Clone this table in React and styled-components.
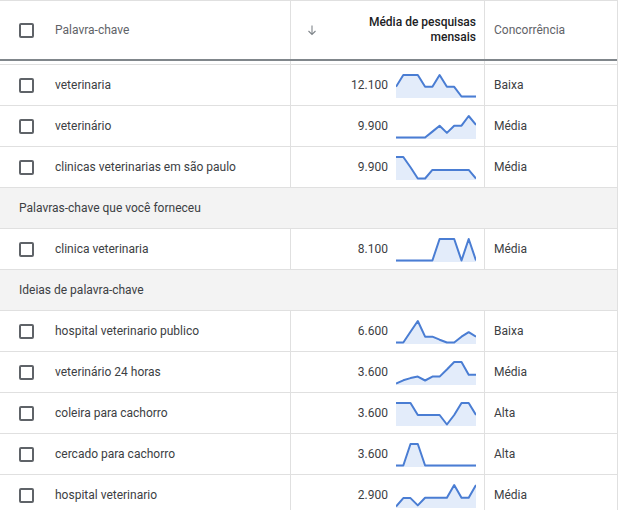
import React from 'react';
import styled, { createGlobalStyle } from 'styled-components';

const GlobalStyle = createGlobalStyle`
    body {
        margin: 0;
        background: #fff;
        font-family: Roboto, 'Liberation Sans', Arial, sans-serif;
    }
`;

const Table = styled.div`
    width: 618px;
    box-sizing: border-box;
    border-top: 1px solid #e0e0e0;
    border-right: 1px solid #e0e0e0;
    font-size: 12px;
    color: #3c4043;
`;

const Grid = styled.div`
    display: grid;
    grid-template-columns: 291px 194px 1fr;
    height: ${(p) => p.$height}px;
    border-bottom: ${(p) => p.$border || '1px solid #e0e0e0'};
`;

const Cell = styled.div`
    display: flex;
    align-items: center;
    box-sizing: border-box;
    min-width: 0;
    border-right: ${(p) => (p.$last ? 'none' : '1px solid #e0e0e0')};
`;

const KeywordCell = styled(Cell)`
    padding-left: 19px;
    gap: 21px;
    color: ${(p) => (p.$head ? '#5f6368' : '#3c4043')};
`;

const VolumeCell = styled(Cell)`
    justify-content: flex-end;
    gap: 8px;
    padding-right: 8px;
`;

const HeadVolumeCell = styled(Cell)`
    justify-content: space-between;
    padding: 0 8px 0 15px;
`;

const HeadTitle = styled.div`
    text-align: right;
    font-weight: 500;
    color: #202124;
    line-height: 15px;
`;

const CompCell = styled(Cell)`
    padding-left: 9px;
    color: ${(p) => (p.$head ? '#5f6368' : '#3c4043')};
`;

const Checkbox = styled.span`
    display: inline-block;
    flex: none;
    width: 15px;
    height: 15px;
    box-sizing: border-box;
    border: 2px solid #5f6368;
    border-radius: 2px;
`;

const Section = styled.div`
    height: 40px;
    display: flex;
    align-items: center;
    padding-left: 19px;
    background: #f3f3f3;
    border-bottom: 1px solid #e0e0e0;
    color: #3c4043;
`;

const Spark = styled.svg`
    display: block;
    flex: none;
`;

const rows = [
    { kw: 'veterinaria', vol: '12.100', comp: 'Baixa', d: [0.45, 1, 1, 1, 0.45, 0.45, 1, 0.45, 0.45, 0, 0, 0] },
    { kw: 'veterinário', vol: '9.900', comp: 'Média', d: [0, 0, 0, 0, 0, 0.275, 0.55, 0.215, 0.55, 0.55, 1, 0.585] },
    { kw: 'clinicas veterinarias em são paulo', vol: '9.900', comp: 'Média', d: [1, 1, 0.52, 0, 0, 0.4, 0.4, 0.4, 0.4, 0.4, 0.4, 0] },
    { section: 'Palavras-chave que você forneceu' },
    { kw: 'clinica veterinaria', vol: '8.100', comp: 'Média', d: [0, 0, 0, 0, 0, 0, 1, 1, 1, 0, 1, 0] },
    { section: 'Ideias de palavra-chave' },
    { kw: 'hospital veterinario publico', vol: '6.600', comp: 'Baixa', d: [0, 0, 0.5, 1, 0.27, 0.27, 0.13, 0, 0, 0.27, 0.48, 0.27] },
    { kw: 'veterinário 24 horas', vol: '3.600', comp: 'Média', d: [0, 0.15, 0.25, 0.32, 0.14, 0.32, 0.32, 0.65, 1, 1, 0.41, 0.41] },
    { kw: 'coleira para cachorro', vol: '3.600', comp: 'Alta', d: [1, 1, 1, 0.44, 0.44, 0.44, 0.44, 0, 0.44, 1, 1, 0.44] },
    { kw: 'cercado para cachorro', vol: '3.600', comp: 'Alta', d: [0, 0, 1, 1, 0, 0, 0, 0, 0, 0, 0, 0] },
    { kw: 'hospital veterinario', vol: '2.900', comp: 'Média', d: [0, 0.39, 0.39, 0.05, 0.41, 0.41, 0.41, 0.41, 1, 0.41, 0.41, 1] },
];

function Sparkline({ data }) {
    const w = 80;
    const h = 26;
    const pts = data.map((v, i) => [(i * w) / (data.length - 1), 3 + (1 - v) * 21.5]);
    const line = pts.map(([x, y], i) => `${i ? 'L' : 'M'}${x.toFixed(1)} ${y.toFixed(1)}`).join(' ');
    const area = `${line} L${w} ${h} L0 ${h} Z`;
    return (
        <Spark width={w} height={h} viewBox={`0 0 ${w} ${h}`}>
            <path d={area} fill="#e3ecfa" />
            <path d={line} fill="none" stroke="#4a7dd3" strokeWidth="2" strokeLinejoin="round" />
        </Spark>
    );
}

function ArrowDown() {
    return (
        <svg width="12" height="12" viewBox="0 0 12 12">
            <path d="M6 1.5 V10.5 M2.5 7 L6 10.5 L9.5 7" fill="none" stroke="#80868b" strokeWidth="1.1" />
        </svg>
    );
}

export default function App() {
    return (
        <>
            <GlobalStyle />
            <Table>
                <Grid $height={58} $border="2px solid #80868b">
                    <KeywordCell $head>
                        <Checkbox />
                        Palavra-chave
                    </KeywordCell>
                    <HeadVolumeCell>
                        <ArrowDown />
                        <HeadTitle>
                            Média de pesquisas
                            <br />
                            mensais
                        </HeadTitle>
                    </HeadVolumeCell>
                    <CompCell $head $last>
                        Concorrência
                    </CompCell>
                </Grid>
                <Grid $height={3}>
                    <Cell />
                    <Cell />
                    <Cell $last />
                </Grid>
                {rows.map((r, i) =>
                    r.section ? (
                        <Section key={i}>{r.section}</Section>
                    ) : (
                        <Grid key={i} $height={40}>
                            <KeywordCell>
                                <Checkbox />
                                {r.kw}
                            </KeywordCell>
                            <VolumeCell>
                                {r.vol}
                                <Sparkline data={r.d} />
                            </VolumeCell>
                            <CompCell $last>{r.comp}</CompCell>
                        </Grid>
                    )
                )}
            </Table>
        </>
    );
}
